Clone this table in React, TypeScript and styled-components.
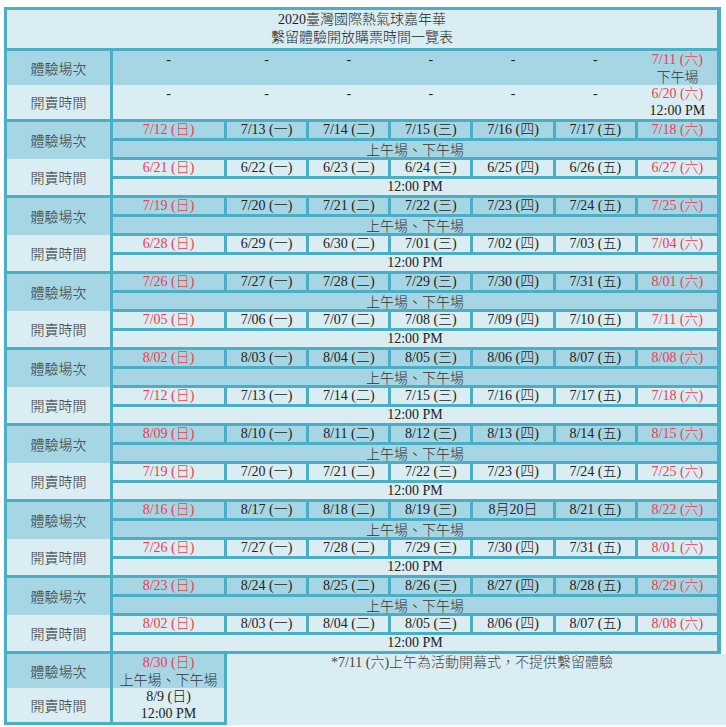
import React from 'react';
import styled, { createGlobalStyle } from 'styled-components';

const TEAL = '#4baec7';
const DARK = '#a6d5e3';
const LIGHT = '#d9edf3';
const RED = '#f23a50';

const GlobalStyle = createGlobalStyle`
  html, body {
    margin: 0;
    padding: 0;
    background: #ffffff;
    overflow: hidden;
  }
  body {
    font-family: "Liberation Serif", "Noto Sans CJK TC", serif;
    font-size: 14px;
    font-weight: 300;
    color: #222;
  }
`;

const Table = styled.div`
  margin: 7px 0 0 4px;
  width: 717px;
  box-sizing: border-box;
  background: ${TEAL};
  padding: 3px 4px 3px 3px;
  display: flex;
  flex-direction: column;
  gap: 3px;
`;

const Title = styled.div`
  background: ${LIGHT};
  text-align: center;
  line-height: 18px;
  padding: 1px 0;
  color: #1f1f1f;
`;

const TopBlock = styled.div`
  display: grid;
  grid-template-columns: 103px 1fr;
  column-gap: 3px;
`;

const HeaderStack = styled.div`
  display: flex;
  flex-direction: column;
  grid-row: 1 / span 4;
  grid-column: 1;
`;

const Label = styled.div<{ $dark?: boolean }>`
  flex: 1;
  display: flex;
  align-items: center;
  justify-content: center;
  background: ${({ $dark }) => ($dark ? DARK : LIGHT)};
  color: #333;
  font-family: "Noto Sans CJK TC", sans-serif;
  font-size: 14px;
`;

const TopRows = styled.div`
  display: flex;
  flex-direction: column;
`;

const TopRow = styled.div<{ $dark?: boolean }>`
  display: grid;
  grid-template-columns: 111px repeat(6, 1fr);
  column-gap: 3px;
  height: 34px;
  background: ${({ $dark }) => ($dark ? DARK : LIGHT)};
  line-height: 17px;
  text-align: center;
`;

const TopCell = styled.div`
  align-self: start;
`;

const Block = styled.div`
  display: grid;
  grid-template-columns: 103px 111px repeat(6, 1fr);
  grid-auto-rows: 16px;
  gap: 3px;
`;

const Cell = styled.div<{ $dark?: boolean; $red?: boolean; $span?: number }>`
  background: ${({ $dark }) => ($dark ? DARK : LIGHT)};
  color: ${({ $red }) => ($red ? RED : '#222')};
  grid-column: ${({ $span }) => ($span ? `span ${$span}` : 'auto')};
  text-align: center;
  line-height: 16px;
  white-space: nowrap;
`;

const Session = styled.span`
  color: #333;
  font-family: "Noto Sans CJK TC", sans-serif;
`;

const Red = styled.span`
  color: ${RED};
`;

const LastBlock = styled.div`
  display: grid;
  grid-template-columns: 103px 111px 1fr;
  column-gap: 3px;
`;

const LastHeader = styled.div`
  display: flex;
  flex-direction: column;
  height: 68px;
`;

const LastColumn = styled.div`
  display: flex;
  flex-direction: column;
`;

const LastHalf = styled.div<{ $dark?: boolean }>`
  height: 34px;
  background: ${({ $dark }) => ($dark ? DARK : LIGHT)};
  text-align: center;
  line-height: 17px;
  white-space: nowrap;
`;

const Note = styled.div`
  background: ${LIGHT};
  margin-right: -14px;
  margin-bottom: -24px;
  padding-right: 14px;
  text-align: center;
  line-height: 17px;
  color: #444;
`;

const DAYS = ['日', '一', '二', '三', '四', '五', '六'];

type Week = { sessions: string[]; opens: string[] };

const weeks: Week[] = [
  { sessions: ['7/12', '7/13', '7/14', '7/15', '7/16', '7/17', '7/18'], opens: ['6/21', '6/22', '6/23', '6/24', '6/25', '6/26', '6/27'] },
  { sessions: ['7/19', '7/20', '7/21', '7/22', '7/23', '7/24', '7/25'], opens: ['6/28', '6/29', '6/30', '7/01', '7/02', '7/03', '7/04'] },
  { sessions: ['7/26', '7/27', '7/28', '7/29', '7/30', '7/31', '8/01'], opens: ['7/05', '7/06', '7/07', '7/08', '7/09', '7/10', '7/11'] },
  { sessions: ['8/02', '8/03', '8/04', '8/05', '8/06', '8/07', '8/08'], opens: ['7/12', '7/13', '7/14', '7/15', '7/16', '7/17', '7/18'] },
  { sessions: ['8/09', '8/10', '8/11', '8/12', '8/13', '8/14', '8/15'], opens: ['7/19', '7/20', '7/21', '7/22', '7/23', '7/24', '7/25'] },
  { sessions: ['8/16', '8/17', '8/18', '8/19', '8月20日', '8/21', '8/22'], opens: ['7/26', '7/27', '7/28', '7/29', '7/30', '7/31', '8/01'] },
  { sessions: ['8/23', '8/24', '8/25', '8/26', '8/27', '8/28', '8/29'], opens: ['8/02', '8/03', '8/04', '8/05', '8/06', '8/07', '8/08'] },
];

const label = (date: string, i: number) => (date.includes('月') ? date : `${date} (${DAYS[i]})`);

const WeekBlock: React.FC<{ week: Week }> = ({ week }) => (
  <Block>
    <HeaderStack>
      <Label $dark>體驗場次</Label>
      <Label>開賣時間</Label>
    </HeaderStack>
    {week.sessions.map((d, i) => (
      <Cell key={'s' + i} $dark $red={i === 0 || i === 6}>{label(d, i)}</Cell>
    ))}
    <Cell $dark $span={7}><Session>上午場、下午場</Session></Cell>
    {week.opens.map((d, i) => (
      <Cell key={'o' + i} $red={i === 0 || i === 6}>{label(d, i)}</Cell>
    ))}
    <Cell $span={7}>12:00 PM</Cell>
  </Block>
);

export default function App() {
  return (
    <>
      <GlobalStyle />
      <Table>
        <Title>
          2020臺灣國際熱氣球嘉年華
          <br />
          繫留體驗開放購票時間一覽表
        </Title>

        <TopBlock>
          <HeaderStack>
            <Label $dark>體驗場次</Label>
            <Label>開賣時間</Label>
          </HeaderStack>
          <TopRows>
            <TopRow $dark>
              {[0, 1, 2, 3, 4, 5].map((i) => <TopCell key={i}>-</TopCell>)}
              <TopCell>
                <Red>7/11 (六)</Red>
                <br />
                <Session>下午場</Session>
              </TopCell>
            </TopRow>
            <TopRow>
              {[0, 1, 2, 3, 4, 5].map((i) => <TopCell key={i}>-</TopCell>)}
              <TopCell>
                <Red>6/20 (六)</Red>
                <br />
                12:00 PM
              </TopCell>
            </TopRow>
          </TopRows>
        </TopBlock>

        {weeks.map((w, i) => (
          <WeekBlock key={i} week={w} />
        ))}

        <LastBlock>
          <LastHeader>
            <Label $dark>體驗場次</Label>
            <Label>開賣時間</Label>
          </LastHeader>
          <LastColumn>
            <LastHalf $dark>
              <Red>8/30 (日)</Red>
              <br />
              <Session>上午場、下午場</Session>
            </LastHalf>
            <LastHalf>
              8/9 (日)
              <br />
              12:00 PM
            </LastHalf>
          </LastColumn>
          <Note>*7/11 (六)上午為活動開幕式，不提供繫留體驗</Note>
        </LastBlock>
      </Table>
    </>
  );
}
